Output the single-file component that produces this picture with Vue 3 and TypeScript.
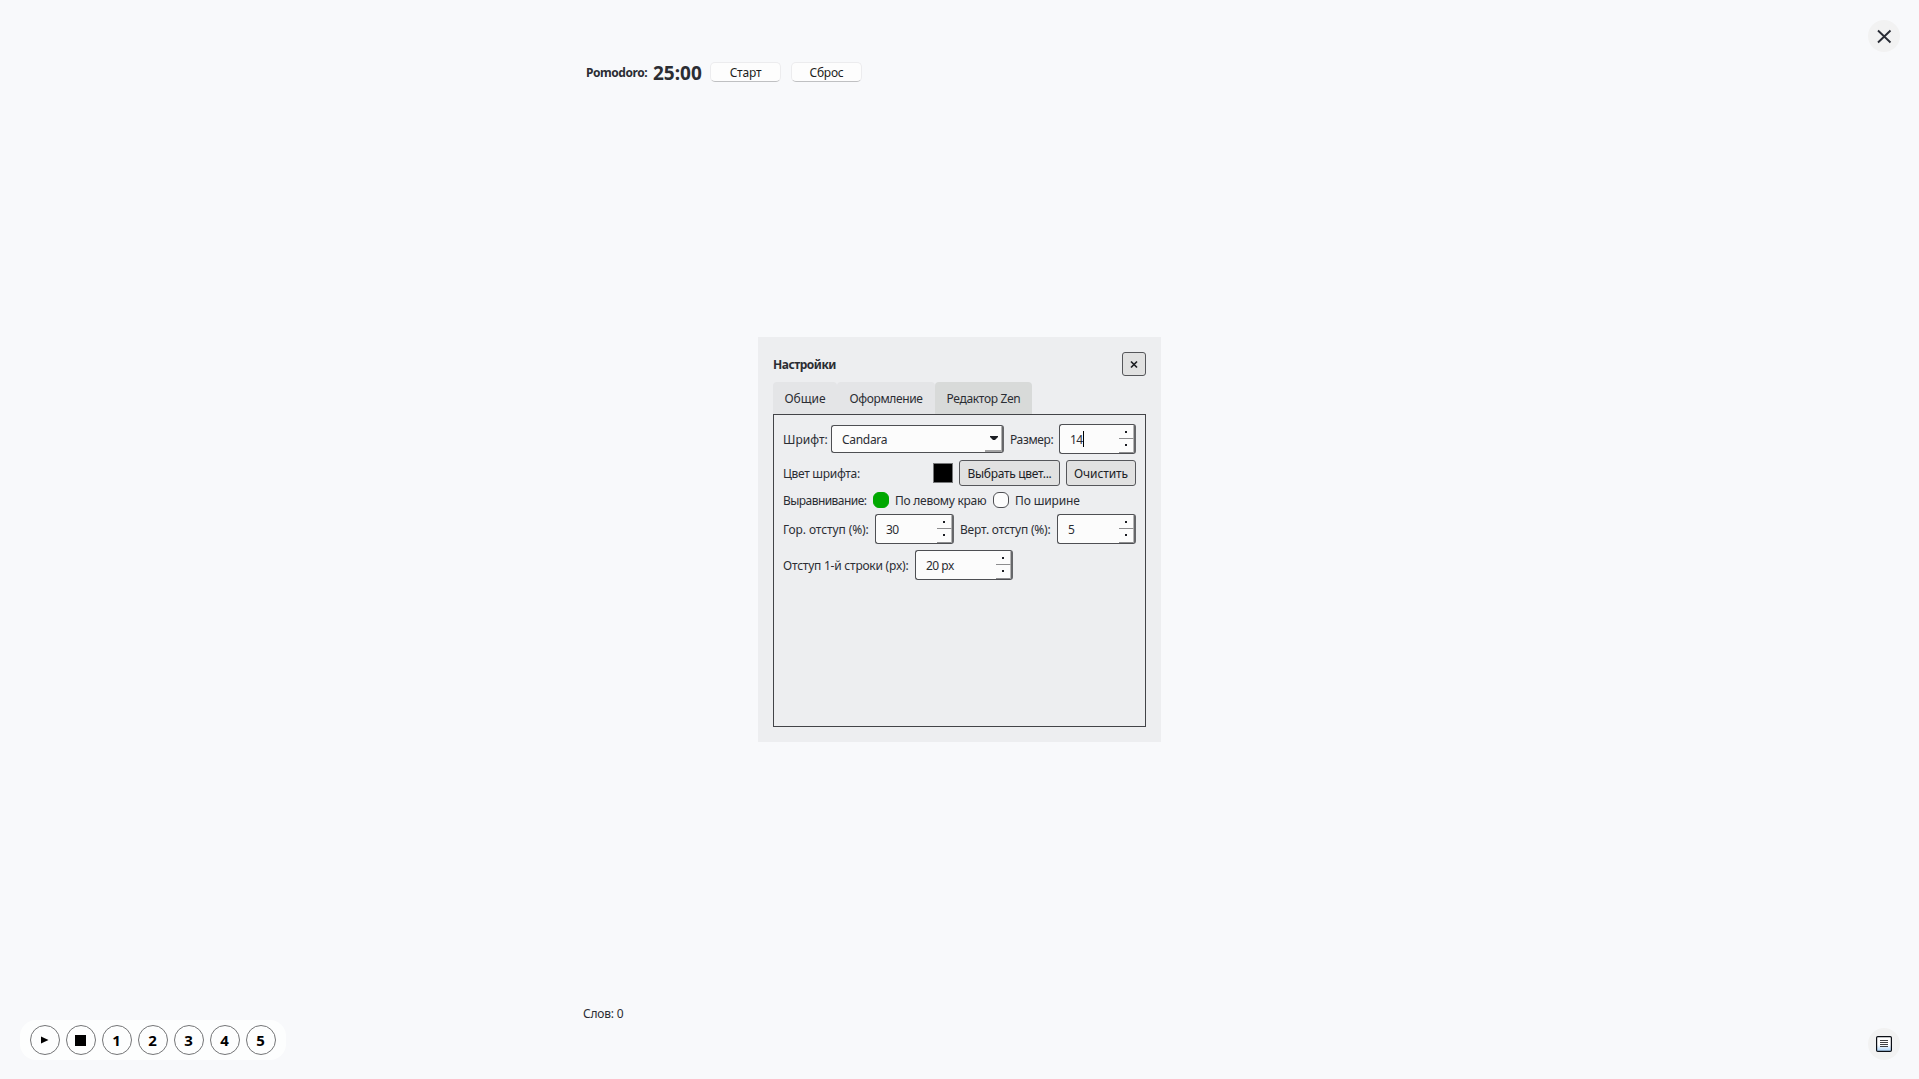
<script setup lang="ts">
import { ref } from 'vue'

const tabs = [
  { name: 'Общие', cls: 'general' },
  { name: 'Оформление', cls: 'look' },
  { name: 'Редактор Zen', cls: 'zen' },
]
const active = ref('zen')
const align = ref('left')
const slots = [1, 2, 3, 4, 5]
</script>

<template>
  <div class="screen">
    <header class="top">
      <div class="pomodoro">
        <span class="pomo-label">Pomodoro:</span>
        <span class="clock">25:00</span>
        <button class="pomo-btn start">Старт</button>
        <button class="pomo-btn">Сброс</button>
      </div>
      <button class="round">
        <svg width="32" height="32" viewBox="0 0 32 32"><path d="M10 10.5 22.5 22.5M22.5 10.5 10 22.5" fill="none" stroke="#292c35" stroke-width="1.9" /></svg>
      </button>
    </header>

    <main class="stage">
      <section class="dialog">
        <div class="title-row">
          <h1>Настройки</h1>
          <button class="close">
            <svg width="22" height="22" viewBox="0 0 22 22"><path d="m8 8.5 6 6m0-6-6 6" fill="none" stroke="#1d1f23" stroke-width="1.7" /></svg>
          </button>
        </div>
        <nav class="tabs">
          <button v-for="t in tabs" :key="t.cls" class="tab" :class="[t.cls, { active: active === t.cls }]" @click="active = t.cls">{{ t.name }}</button>
        </nav>
        <div class="panel">
          <div class="row r1">
            <label class="l-font">Шрифт:</label>
            <div class="field combo">
              <span>Candara</span>
              <i class="drop"><svg width="8" height="4" viewBox="0 0 8 4"><path d="M0 0h8v1L5 4H3L0 1z" fill="#1c1e24" /></svg></i>
            </div>
            <label class="l-size">Размер:</label>
            <div class="field spin s-size"><span>14</span><b class="caret"></b><i class="steps"><u></u><u></u></i></div>
          </div>
          <div class="row r2">
            <label class="l-color">Цвет шрифта:</label>
            <span class="swatch"></span>
            <button class="btn pick">Выбрать цвет...</button>
            <button class="btn clear">Очистить</button>
          </div>
          <div class="row r3">
            <label class="l-align">Выравнивание:</label>
            <span class="radio" :class="{ on: align === 'left' }" @click="align = 'left'"></span>
            <label class="l-left">По левому краю</label>
            <span class="radio" :class="{ on: align === 'width' }" @click="align = 'width'"></span>
            <label class="l-width">По ширине</label>
          </div>
          <div class="row r4">
            <label class="l-hor">Гор. отступ (%):</label>
            <div class="field spin s-hor"><span>30</span><i class="steps"><u></u><u></u></i></div>
            <label class="l-ver">Верт. отступ (%):</label>
            <div class="field spin s-ver"><span>5</span><i class="steps"><u></u><u></u></i></div>
          </div>
          <div class="row r5">
            <label class="l-indent">Отступ 1-й строки (px):</label>
            <div class="field spin s-indent"><span>20 px</span><i class="steps"><u></u><u></u></i></div>
          </div>
        </div>
      </section>
    </main>

    <footer class="bottom">
      <div class="player">
        <button><svg width="8" height="8" viewBox="0 0 8 8"><path d="M0 0.5 7.5 4 0 7.5z" /></svg></button>
        <button><svg width="11" height="11" viewBox="0 0 11 11"><path d="M0 0h11v11H0z" /></svg></button>
        <button v-for="n in slots" :key="n">{{ n }}</button>
      </div>
      <div class="words">Слов: 0</div>
      <button class="round">
        <svg width="32" height="32" viewBox="0 0 32 32">
          <defs><linearGradient id="page" x2="0" y2="1"><stop offset=".55" stop-color="#fff" /><stop offset="1" stop-color="#a9d3fa" /></linearGradient></defs>
          <rect x="8.6" y="8.6" width="14.8" height="14.8" rx="1.2" fill="url(#page)" stroke="#0b0e14" stroke-width="1.2" />
          <path d="M12 12.5h8M12 14.5h8M12 16.5h8M12 18.5h8" stroke="#3f4144" />
        </svg>
      </button>
    </footer>
  </div>
</template>

<style>
body { margin: 0; background: #f8f9fb; }
</style>

<style scoped>
.screen {
  display: flex;
  flex-direction: column;
  width: 1919px;
  height: 1079px;
  background: #f8f9fb;
  color: #2b2d33;
  font: 12px/16px "Noto Sans", "Open Sans", sans-serif;
  overflow: hidden;
}
.screen * { box-sizing: border-box; }
button { font: inherit; color: inherit; margin: 0; padding: 0; border: 0; background: none; white-space: nowrap; display: flex; align-items: center; justify-content: center; flex: none; }
svg { display: block; flex: none; }
label, span, h1 { white-space: nowrap; }

.top { display: flex; height: 337px; padding: 20px 19px 0 586px; justify-content: space-between; }
.pomodoro { display: flex; align-items: center; height: 20px; margin-top: 42px; }
.pomo-label { width: 67px; padding-top: 2px; font-weight: 700; letter-spacing: -0.45px; }
.clock { width: 57px; padding-top: 2px; font-size: 19px; font-weight: 700; letter-spacing: 0; }
.pomo-btn { width: 71px; height: 20px; padding-top: 2px; background: #fdfdfd; border: 1px solid #ececee; border-bottom-color: #bfc0c2; border-radius: 5px; color: #1c1c20; letter-spacing: -0.2px; }
.start { margin-right: 10px; }
.round { width: 32px; height: 32px; border-radius: 50%; background: #f2f2f2; }

.stage { display: flex; padding-left: 758px; }
.dialog { width: 403px; height: 405px; padding: 15px; background: #edeef0; }
.title-row { display: flex; justify-content: space-between; align-items: center; height: 24px; }
h1 { margin: 0; padding-top: 1px; font-size: 12px; font-weight: 700; line-height: 16px; letter-spacing: -0.5px; }
.close { width: 24px; height: 24px; border: 1px solid #55565a; border-radius: 3px; background: #e1e1e1; }
.tabs { display: flex; height: 32px; margin-top: 6px; }
.tab { height: 32px; padding-top: 2px; background: #e4e5e7; border-radius: 4px 4px 0 0; }
.general { width: 64px; }
.look { width: 98px; letter-spacing: -0.35px; }
.zen { width: 97px; letter-spacing: -0.35px; }
.tab.active { background: #d8dad9; }
.panel { height: 313px; border: 1px solid #434448; padding: 9px; }
.row { display: flex; align-items: center; }
.row label { flex: none; padding-top: 2px; }
.r1 { height: 30px; }
.r2 { height: 26px; margin-top: 6px; }
.r3 { height: 16px; margin-top: 6px; }
.r4 { height: 30px; margin-top: 6px; }
.r5 { height: 30px; margin-top: 6px; }
.l-font { width: 48px; }
.l-size { width: 49px; letter-spacing: -0.35px; }
.l-color { width: 150px; letter-spacing: -0.3px; }
.l-align { width: 90px; letter-spacing: -0.55px; }
.l-left { width: 98px; letter-spacing: -0.26px; }
.l-width { letter-spacing: -0.13px; }
.l-hor { width: 92px; letter-spacing: -0.1px; }
.l-ver { width: 97px; letter-spacing: -0.2px; }
.l-indent { width: 132px; letter-spacing: -0.23px; }

.field { display: flex; align-items: center; height: 30px; border: 1px solid #4e4f53; border-right: 2px solid #66676a; border-bottom-width: 1.5px; border-radius: 3px; background: #fcfcfc; padding-left: 10px; flex: none; }
.field span { padding-top: 1px; letter-spacing: -0.5px; }
.combo { width: 173px; height: 28px; margin-right: 6px; }
.combo span { letter-spacing: -0.3px; padding-top: 2px; }
.drop { display: flex; align-items: center; justify-content: flex-end; width: 17px; height: 26px; margin-left: auto; padding-right: 3px; border-bottom: 2px solid #a2a2a3; border-right: 1px solid #b0b0b0; }
.steps { display: flex; flex-direction: column; width: 15px; height: 28px; margin-left: auto; }
.steps u { display: flex; height: 14px; border-bottom: 1px solid #8d8d8f; border-right: 1px solid #b5b5b6; }
.steps u::after { content: ""; width: 2px; height: 2px; margin: 6px 0 0 6px; background: #1c1e24; }
.steps u + u::after { margin-top: 5px; }
.caret { width: 1px; height: 16px; background: #000; }
.s-size { width: 77px; }
.s-hor { width: 79px; margin-right: 6px; }
.s-ver { width: 79px; }
.s-indent { width: 98px; }
.swatch { width: 20px; height: 20px; background: #000; border: 1px solid #77787a; margin-right: 6px; }
.btn { height: 26px; padding-top: 2px; border: 1px solid #55565a; border-radius: 3px; background: #e1e1e1; color: #202126; }
.pick { width: 101px; margin-right: 6px; letter-spacing: -0.3px; }
.clear { width: 70px; letter-spacing: -0.1px; }
.radio { width: 16px; height: 16px; border: 1px solid #4e4f53; border-radius: 6px; background: #fcfcfc; margin-right: 6px; }
.radio.on { background: #00a800; border-color: #00a800; }

.bottom { display: flex; height: 337px; padding-left: 20px; align-items: flex-start; padding-right: 19px; }
.player { display: flex; gap: 6px; width: 266px; height: 40px; padding: 5px 10px; margin-top: 278px; border-radius: 16px; background: #fdfefe; }
.player button { width: 30px; height: 30px; padding-right: 1px; border: 1px solid #747577; border-radius: 50%; font: 700 15px/20px "Noto Sans", sans-serif; color: #000; }
.words { margin: 264px auto 0 297px; letter-spacing: -0.2px; }
.bottom .round { margin-top: 286px; }
</style>
